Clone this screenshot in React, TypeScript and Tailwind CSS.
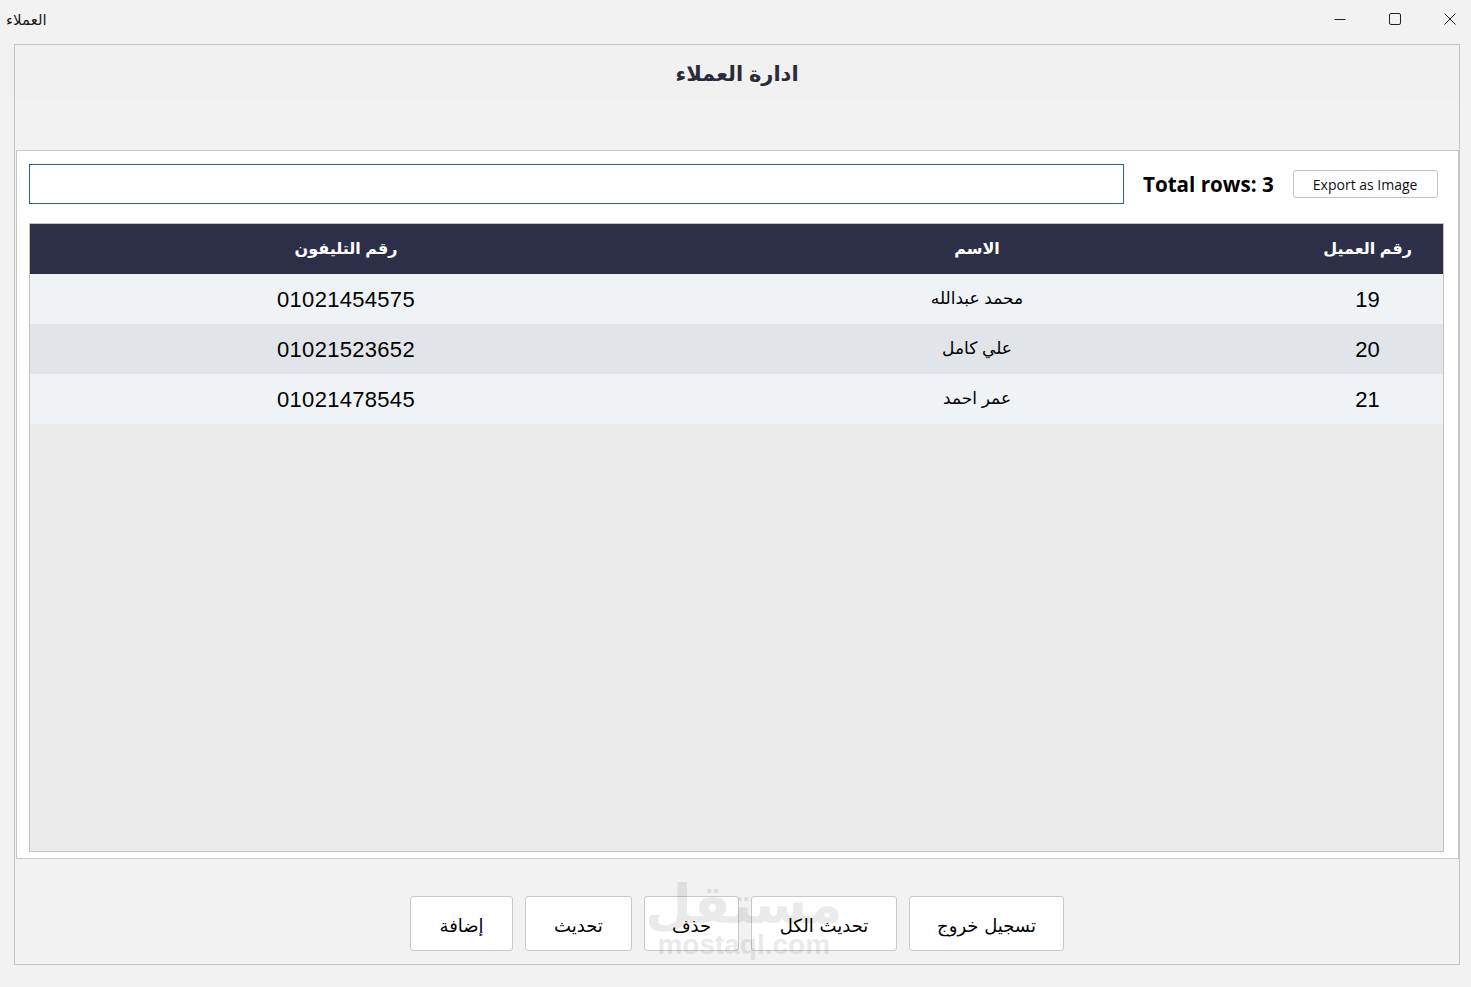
import React from 'react';

type Customer = {
  id: number;
  name: string;
  phone: string;
};

const customers: Customer[] = [
  { id: 19, name: 'محمد عبدالله', phone: '01021454575' },
  { id: 20, name: 'علي كامل', phone: '01021523652' },
  { id: 21, name: 'عمر احمد', phone: '01021478545' },
];

const actions = ['إضافة', 'تحديث', 'حذف', 'تحديث الكل', 'تسجيل خروج'];
const actionWidths = ['w-[103px]', 'w-[107px]', 'w-[95px]', 'w-[146px]', 'w-[155px]'];

const TitleBar: React.FC = () => (
  <div className="h-[44px] flex items-start justify-between">
    <span className="pt-[9px] pl-[6px] text-[15px] text-[#1a1a1a]" style={{ fontFamily: '"DejaVu Sans", sans-serif' }}>
      العملاء
    </span>
    <div className="flex items-center gap-[43px] h-[38px] pr-[15px] text-[#222]">
      <svg width="12" height="12" viewBox="0 0 12 12">
        <path d="M0.5 6.5h11" stroke="currentColor" strokeWidth="1" />
      </svg>
      <svg width="12" height="12" viewBox="0 0 12 12">
        <rect x="0.5" y="0.5" width="11" height="11" rx="1.5" fill="none" stroke="currentColor" strokeWidth="1" />
      </svg>
      <svg width="12" height="12" viewBox="0 0 12 12">
        <path d="M0.5 0.5l11 11M11.5 0.5l-11 11" stroke="currentColor" strokeWidth="1" />
      </svg>
    </div>
  </div>
);

const CustomersTable: React.FC = () => (
  <div className="flex-1 border border-[#c3c3c3] bg-[#ebebeb] flex flex-col" dir="rtl">
    <div className="h-[50px] bg-[#2d2f48] flex items-center text-white text-[16px] font-bold">
      <div className="w-[151px] text-center">رقم العميل</div>
      <div className="w-[630px] text-center">الاسم</div>
      <div className="flex-1 text-center">رقم التليفون</div>
    </div>
    {customers.map((c, i) => (
      <div
        key={c.id}
        className={`h-[50px] flex items-center text-black ${i % 2 === 1 ? 'bg-[#e1e5e9]' : 'bg-[#eff3f6]'}`}
      >
        <div className="w-[151px] text-center text-[22px]">{c.id}</div>
        <div className="w-[630px] text-center text-[17px]">{c.name}</div>
        <div className="flex-1 text-center text-[22px] tracking-[0.3px]">{c.phone}</div>
      </div>
    ))}
  </div>
);

const App: React.FC = () => {
  return (
    <div
      className="w-[1471px] h-[987px] bg-[#f2f2f2] flex flex-col overflow-hidden relative"
      style={{ fontFamily: '"Liberation Sans", "DejaVu Sans", Arial, sans-serif' }}
    >
      <TitleBar />

      <div className="ml-[14px] mr-[11px] h-[921px] border border-[#c3c3c3] flex flex-col">
        {/* page heading */}
        <div className="h-[55px] bg-[#f1f1f1] flex justify-center pt-[13px]">
          <h1 className="text-[21px] font-bold text-[#2b2b3a]" dir="rtl">ادارة العملاء</h1>
        </div>
        <div className="h-[50px]" />

        {/* main card */}
        <div className="ml-px h-[709px] bg-white border border-[#c8c8c8] flex flex-col pt-[13px] pl-[12px] pr-[14px] pb-[6px]">
          <div className="flex items-center h-[40px]">
            <input className="w-[1095px] h-[40px] border border-[#2d5b94] outline-none px-2 text-[16px]" />
            <span className="ml-[19px] text-[20.6px] font-bold text-black" style={{ fontFamily: '"Open Sans", "Liberation Sans", sans-serif' }}>
              Total rows: 3
            </span>
            <button
              className="ml-[19px] w-[145px] h-[28px] bg-white border border-[#c4c4c4] rounded-[3px] text-[14px] text-[#111]"
              style={{ fontFamily: '"Open Sans", "Liberation Sans", sans-serif' }}
            >
              Export as Image
            </button>
          </div>
          <div className="h-[19px]" />
          <CustomersTable />
        </div>

        {/* action buttons */}
        <div className="flex-1 flex justify-center items-start pt-[37px] gap-[12px]" dir="ltr">
          {actions.map((label, i) => (
            <button
              key={label}
              dir="rtl"
              className={`${actionWidths[i]} h-[55px] pt-[3px] bg-white border border-[#c8c8c8] rounded-[3px] text-[18px] text-black`}
              style={{ fontFamily: '"DejaVu Sans", sans-serif' }}
            >
              {label}
            </button>
          ))}
        </div>
      </div>

      {/* site watermark */}
      <div className="absolute left-[645px] top-[880px] flex flex-col items-center pointer-events-none text-[#000] opacity-[0.08]">
        <span className="text-[54px] font-bold leading-[50px]" dir="rtl" style={{ fontFamily: '"DejaVu Sans", sans-serif' }}>
          مستقل
        </span>
        <span className="text-[28px] font-bold leading-[30px]">mostaql.com</span>
      </div>
    </div>
  );
};

export default App;
